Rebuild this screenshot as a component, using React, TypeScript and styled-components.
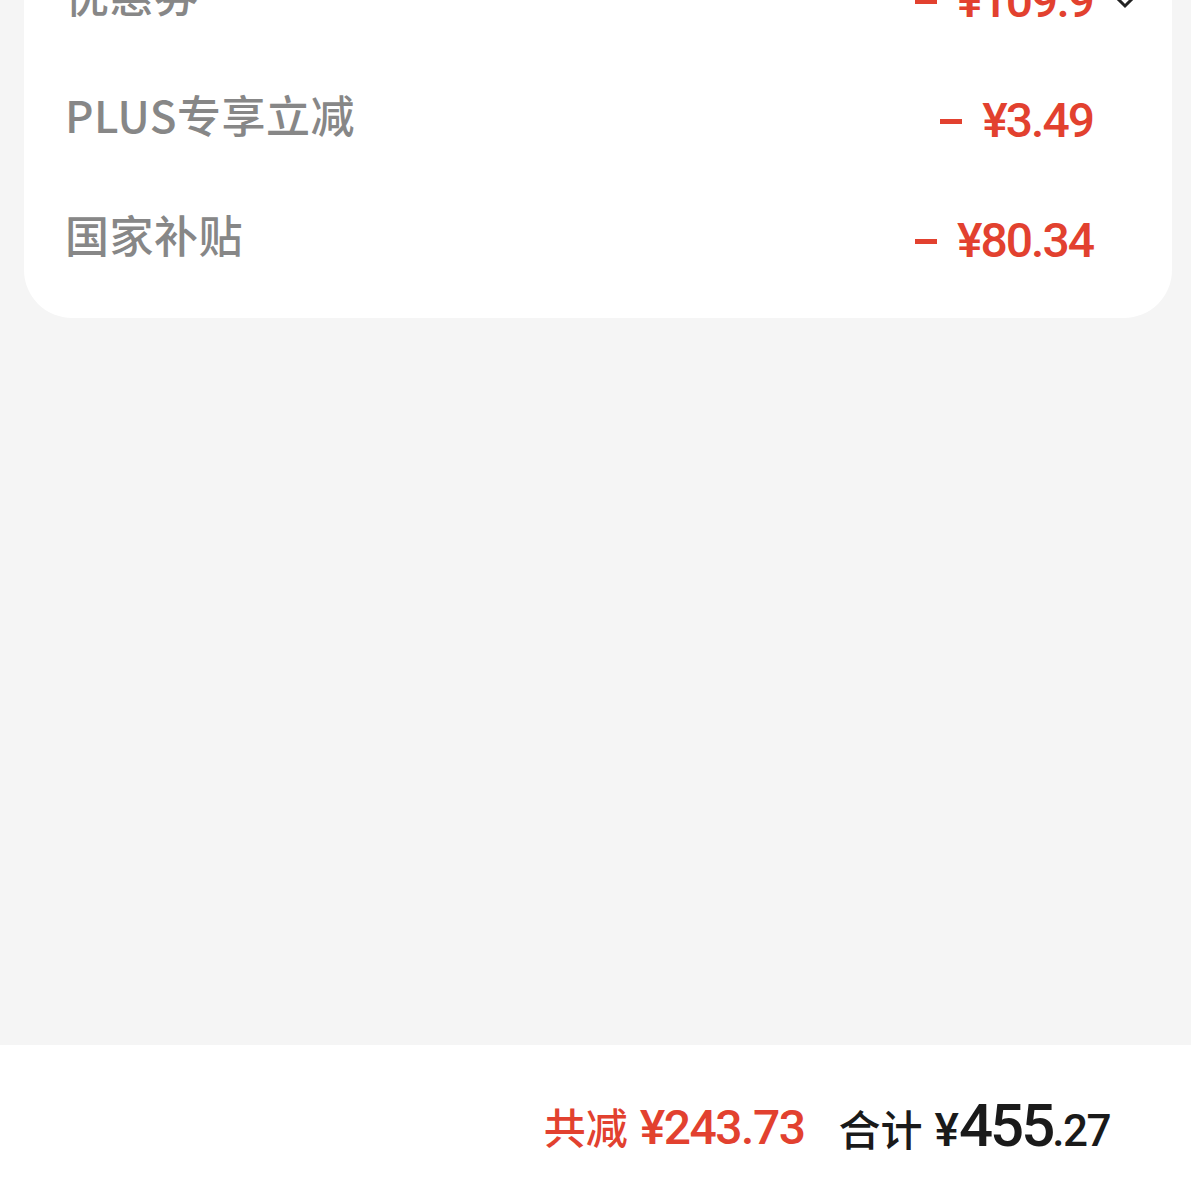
import { createGlobalStyle, styled } from 'styled-components';

const GlobalStyle = createGlobalStyle`
  html, body {
    margin: 0;
    padding: 0;
    background: #f5f5f5;
  }
  body {
    font-family: "Noto Sans CJK SC", "Noto Sans", sans-serif;
  }
`;

const Page = styled.div`
  height: 100vh;
  display: flex;
  flex-direction: column;
  overflow: hidden;
`;

const Card = styled.div`
  margin: -63px 19px 0 24px;
  padding-bottom: 21px;
  background: #fff;
  border-radius: 0 0 48px 48px;
`;

const Row = styled.div`
  height: 120px;
  display: flex;
  align-items: center;
  padding-left: 41px;
`;

const Label = styled.span`
  flex: 1;
  margin-top: -6px;
  font-size: 44px;
  font-weight: 500;
  color: #878787;
  letter-spacing: 0.5px;
`;

const Amount = styled.span`
  margin-top: 6px;
  font-family: Roboto, "Noto Sans", sans-serif;
  font-size: 48px;
  font-weight: 500;
  color: #e2412f;
  letter-spacing: -2px;
  white-space: pre;
`;

const Dash = styled.span`
  display: inline-block;
  width: 22px;
  height: 5px;
  margin: 0 20px 4px 0;
  background: #e2412f;
  vertical-align: middle;
`;

const Trail = styled.div`
  width: 79px;
  height: 100%;
  display: flex;
  align-items: center;
  padding: 8px 0 0 20px;
  box-sizing: border-box;
`;

const Spacer = styled.div`
  flex: 1;
`;

const Footer = styled.div`
  height: 146px;
  background: #fff;
  display: flex;
  justify-content: flex-end;
  align-items: center;
  padding: 14px 81px 0 0;
  box-sizing: border-box;
`;

const Total = styled.div<{ $red?: boolean }>`
  display: flex;
  align-items: baseline;
  color: ${(p) => (p.$red ? '#e2412f' : '#1a1a1a')};
  margin-left: ${(p) => (p.$red ? '0' : '34px')};
`;

const Word = styled.span`
  font-size: 42px;
  font-weight: 500;
  margin-right: 12px;
`;

const Num = styled.span<{ $size: number; $track: number }>`
  font-family: Roboto, "Noto Sans", sans-serif;
  font-size: ${(p) => p.$size}px;
  font-weight: 500;
  letter-spacing: ${(p) => p.$track}px;
`;

const Chevron = () => (
  <svg width="24" height="16" viewBox="0 0 24 16" fill="none">
    <path d="M2 3l10 10L22 3" stroke="#222" strokeWidth="3" />
  </svg>
);

const rows = [
  { label: '优惠券', amount: '¥109.9', more: true },
  { label: 'PLUS专享立减', amount: '¥3.49' },
  { label: '国家补贴', amount: '¥80.34' },
];

export default function App() {
  return (
    <>
      <GlobalStyle />
      <Page>
        <Card>
          {rows.map((r) => (
            <Row key={r.label}>
              <Label>{r.label}</Label>
              <Amount>
                <Dash />
                {r.amount}
              </Amount>
              <Trail>{r.more && <Chevron />}</Trail>
            </Row>
          ))}
        </Card>
        <Spacer />
        <Footer>
          <Total $red>
            <Word>共减</Word>
            <Num $size={48} $track={-1.5}>¥243.73</Num>
          </Total>
          <Total>
            <Word>合计</Word>
            <Num $size={46} $track={0}>¥</Num>
            <Num $size={60} $track={-3}>455</Num>
            <Num $size={44} $track={-1.5}>.27</Num>
          </Total>
        </Footer>
      </Page>
    </>
  );
}
